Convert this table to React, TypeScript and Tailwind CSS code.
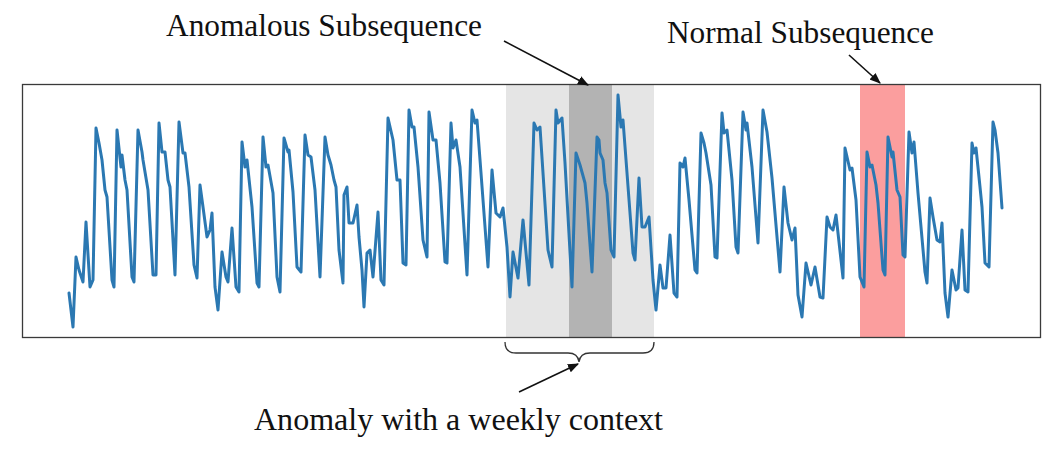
import React from "react";

// series traced from the figure, in page pixels
const points: [number, number][] = [
  [69, 293], [73, 327], [76, 257], [79, 270], [83, 282], [86, 222], [90, 287], [93, 280],
  [96, 128], [99, 143], [102, 160], [105, 190], [107, 197], [112, 280], [114, 287],
  [117, 130], [121, 167], [122, 155], [125, 180], [127, 190], [132, 277], [134, 282],
  [138, 130], [142, 152], [143, 160], [148, 190], [153, 275], [156, 275],
  [159, 123], [162, 152], [165, 152], [168, 180], [170, 187], [175, 275],
  [179, 122], [183, 153], [185, 153], [189, 187], [194, 265], [197, 278],
  [200, 185], [203, 207], [207, 237], [210, 230], [212, 213], [215, 287], [218, 310],
  [222, 252], [226, 277], [228, 282], [232, 228], [236, 287], [239, 292],
  [242, 142], [245, 167], [247, 160], [252, 207], [257, 283], [259, 287],
  [263, 137], [266, 167], [268, 165], [273, 193], [277, 277], [280, 292],
  [284, 138], [288, 152], [289, 150], [293, 192], [297, 267], [301, 272],
  [305, 135], [308, 155], [311, 157], [315, 190], [320, 277],
  [325, 137], [328, 155], [331, 165], [334, 180], [336, 187], [339, 250], [343, 283],
  [344, 195], [347, 187], [349, 223], [353, 223], [357, 205], [359, 237], [362, 270],
  [364, 307], [367, 253], [370, 250], [373, 277], [378, 212], [381, 280], [384, 285],
  [388, 118], [393, 140], [397, 180], [400, 180], [403, 263], [406, 265],
  [409, 110], [412, 127], [414, 127], [418, 167], [423, 240], [427, 257],
  [429, 112], [433, 140], [436, 140], [440, 183], [445, 262], [447, 263],
  [451, 123], [453, 148], [456, 140], [460, 167], [467, 275],
  [472, 110], [475, 123], [477, 120], [481, 173], [488, 267],
  [492, 170], [496, 213], [500, 217], [503, 208], [507, 247], [510, 297],
  [513, 252], [518, 278], [523, 220], [529, 285],
  [534, 123], [537, 130], [540, 127], [543, 173], [548, 250], [552, 267],
  [556, 110], [558, 123], [562, 118], [565, 163], [572, 287],
  [576, 153], [580, 165], [585, 183], [587, 203], [592, 272],
  [597, 137], [599, 140], [600, 153], [603, 160], [605, 183], [607, 193], [611, 250], [614, 257],
  [618, 95], [621, 127], [623, 120], [627, 173], [633, 253], [635, 260],
  [639, 178], [642, 227], [645, 227], [649, 217], [653, 280], [656, 310],
  [660, 265], [663, 288], [666, 288], [670, 235], [674, 293], [677, 297],
  [680, 163], [683, 167], [685, 158], [689, 200], [695, 270], [697, 273],
  [701, 133], [704, 143], [706, 153], [711, 185], [715, 257], [717, 258],
  [722, 113], [724, 133], [727, 130], [732, 180], [736, 247], [738, 253],
  [743, 112], [746, 130], [747, 123], [752, 167], [758, 243],
  [763, 110], [767, 132], [772, 178], [780, 272],
  [784, 187], [788, 223], [792, 240], [795, 228], [798, 295], [802, 317],
  [806, 263], [811, 285], [815, 267], [820, 297], [823, 298],
  [827, 217], [830, 227], [833, 230], [836, 215], [843, 278],
  [845, 148], [850, 170], [852, 168], [856, 200], [860, 277], [864, 287],
  [867, 152], [870, 167], [872, 165], [876, 185], [878, 203], [883, 270], [885, 275],
  [888, 137], [892, 157], [893, 152], [897, 190], [900, 197], [903, 255], [905, 257],
  [909, 132], [912, 153], [914, 142], [918, 193], [925, 272], [927, 283],
  [930, 198], [933, 217], [937, 240], [940, 242], [942, 223], [945, 293], [948, 317],
  [952, 270], [956, 290], [958, 288], [962, 230], [965, 290], [968, 292],
  [972, 143], [974, 153], [976, 148], [980, 187], [982, 207], [985, 263], [989, 267],
  [993, 122], [995, 130], [998, 153], [1002, 208],
];

const linePath = points.map(([x, y], i) => `${i === 0 ? "M" : "L"}${x} ${y}`).join(" ");

function Label({ x, y, width, children }: { x: number; y: number; width: number; children: string }) {
  return (
    <text
      x={x}
      y={y}
      textLength={width}
      lengthAdjust="spacingAndGlyphs"
      fill="#111"
      fontFamily="'Liberation Serif', 'Times New Roman', serif"
      fontSize={31}
    >
      {children}
    </text>
  );
}

export default function App() {
  return (
    <div className="w-[1060px] h-[451px] bg-white overflow-hidden">
      <svg width={1060} height={451} viewBox="0 0 1060 451" className="block">
        <defs>
          <marker id="head" viewBox="0 0 10 10" refX="9" refY="5" markerWidth="7" markerHeight="7" orient="auto">
            <path d="M0 1 L10 5 L0 9 Z" fill="#111" />
          </marker>
        </defs>

        {/* shaded windows */}
        <rect x={506} y={84} width={148} height={254} fill="#e5e5e5" />
        <rect x={569} y={84} width={43} height={254} fill="#b3b3b3" />
        <rect x={860} y={84} width={45} height={254} fill="#fb9e9e" />

        {/* frame */}
        <rect x={22.5} y={84.5} width={1018} height={253} fill="none" stroke="#3a3a3a" strokeWidth={1.3} />

        {/* series */}
        <path d={linePath} fill="none" stroke="#2b78b2" strokeWidth={3} strokeLinejoin="round" strokeLinecap="round" />

        {/* annotations */}
        <Label x={166} y={36} width={316}>Anomalous Subsequence</Label>
        <Label x={667} y={43} width={267}>Normal Subsequence</Label>
        <Label x={254} y={430} width={409}>Anomaly with a weekly context</Label>

        <line x1={504} y1={41} x2={588} y2={85} stroke="#111" strokeWidth={1.6} markerEnd="url(#head)" />
        <line x1={849} y1={55} x2={880} y2={83} stroke="#111" strokeWidth={1.6} markerEnd="url(#head)" />
        <line x1={519} y1={392} x2={578} y2={364} stroke="#111" strokeWidth={1.6} markerEnd="url(#head)" />

        {/* brace */}
        <path
          d="M505 342 Q505 353 516 353 L568 353 Q578 353 579 362 Q580 353 590 353 L643 353 Q654 353 654 342"
          fill="none"
          stroke="#333"
          strokeWidth={1.3}
        />
      </svg>
    </div>
  );
}
